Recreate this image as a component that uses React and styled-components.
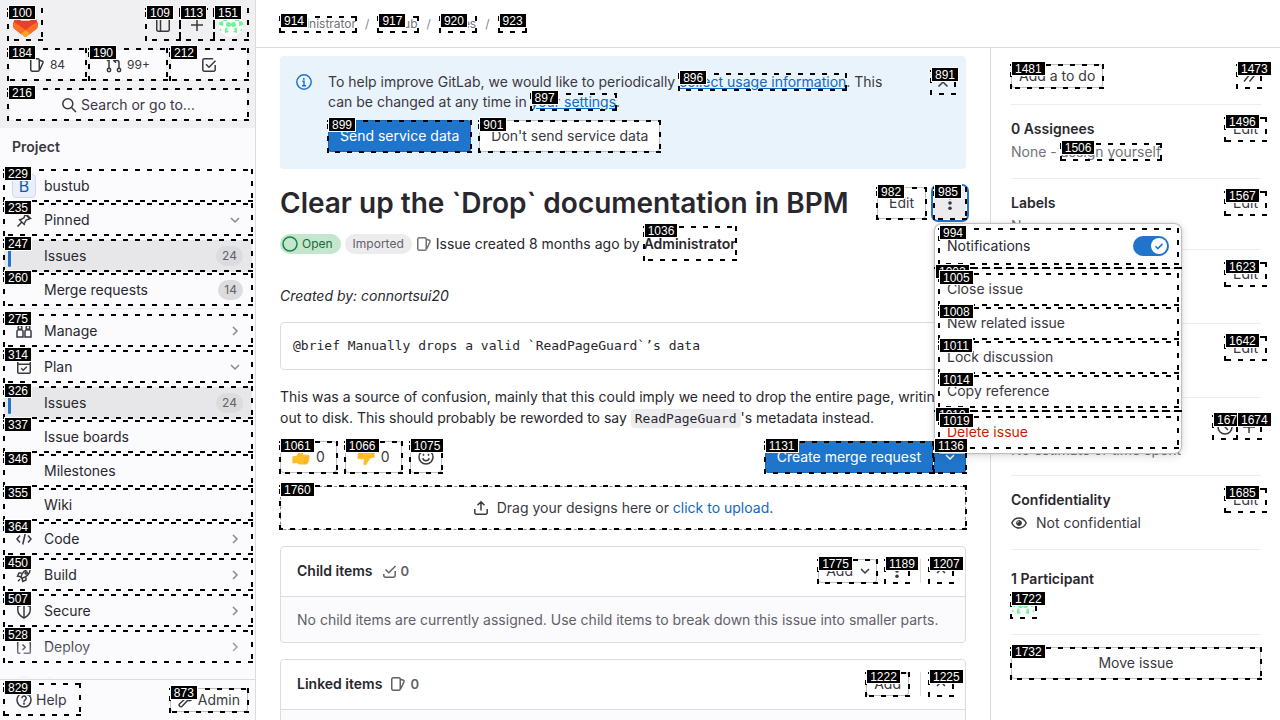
import React from "react";
import styled, { createGlobalStyle, css } from "styled-components";

const sans = `Inter, "Noto Sans", "Liberation Sans", sans-serif`;
const mono = `"DejaVu Sans Mono", "Liberation Mono", monospace`;

const c = {
  text: "#3a383f",
  heading: "#28272d",
  subtle: "#737278",
  muted: "#626168",
  line: "#dcdcde",
  faint: "#ececef",
  blue: "#1f75cb",
  link: "#1068bf",
  side: "#fbfafd",
};

const Global = createGlobalStyle`
  *, *::before, *::after { box-sizing: border-box; }
  body { margin: 0; background: #fff; color: ${c.text}; font: 14px/20px ${sans}; }
  button, input { font: inherit; color: inherit; }
  button { margin: 0; cursor: pointer; }
  a { color: inherit; text-decoration: none; }
  h1, h2, p, ul, pre { margin: 0; padding: 0; }
  ul { list-style: none; }
`;

/* ---------- element marks ---------- */

const dash = (deg) => `repeating-linear-gradient(${deg}deg, #000 0 5px, transparent 5px 12px)`;

const MarkBox = styled.span`
  position: absolute;
  inset: -1px -1px 0 -1px;
  z-index: 20;
  pointer-events: none;
  background:
    ${dash(90)} top left / 100% 2px no-repeat,
    ${dash(270)} bottom left / 100% 2px no-repeat,
    ${dash(0)} top left / 2px 100% no-repeat,
    ${dash(180)} top right / 2px 100% no-repeat;
`;

const MarkTag = styled.span`
  position: absolute;
  top: -4px;
  left: 0;
  z-index: 21;
  pointer-events: none;
  padding: 1px 3px 0;
  border: 1px solid #fff;
  background: #000;
  color: #fff;
  font: 400 12px/12px "Liberation Sans", sans-serif;
  font-style: normal;
  white-space: nowrap;
`;

const loweredMark = css`
  ${MarkBox} { inset: 0 -1px -1px -1px; }
  ${MarkTag} { top: -3px; }
`;

const Mark = ({ n }) => (
  <>
    <MarkBox aria-hidden="true" />
    <MarkTag aria-hidden="true">{n}</MarkTag>
  </>
);

/* ---------- icons ---------- */

const Svg = styled.svg`
  display: block;
  flex: none;
  fill: none;
  stroke: currentColor;
  stroke-width: 1.5;
`;

const shapes = {
  panel: (<><rect x="1.75" y="1.75" width="12.5" height="12.5" rx="1.5" /><path d="M5.5 2v12" /></>),
  plus: <path d="M8 2v12M2 8h12" />,
  issues: (<><rect x="1.75" y="1.75" width="8.5" height="12.5" rx="1.5" /><path d="M10.5 3.2l2.9 1.1a1 1 0 0 1 .6 1.3l-3.2 7.2" /></>),
  merge: (<><circle cx="3" cy="13" r="1.7" /><circle cx="13" cy="13" r="1.7" /><path d="M3 11.2V1.8M1 4l2-2.2M13 11.2V5.5a2 2 0 0 0-2-2H8M10 1.2L7.7 3.5 10 5.8" /></>),
  todo: (<><path d="M14.2 8v4.7a1.5 1.5 0 0 1-1.5 1.5H3.3a1.5 1.5 0 0 1-1.5-1.5V3.3a1.5 1.5 0 0 1 1.5-1.5h8.9" /><path d="M5 7.3l3 3 6.5-6.6" /></>),
  search: (<><circle cx="6.8" cy="6.8" r="5" /><path d="M10.5 10.5L15 15" /></>),
  pin: <path d="M1.5 14.5l4.7-4.7M3 7.2l5.8 5.8M4 8l4-2.2L9.5 1.5l5 5-4.3 1.5L8 12M9 2l5 5" />,
  down: <path d="M4 6l4 4 4-4" />,
  up: <path d="M4 10l4-4 4 4" />,
  right: <path d="M6 4l4 4-4 4" />,
  manage: (<><path d="M1 14V8.5a1.8 1.8 0 0 1 1.8-1.8h2.4A1.8 1.8 0 0 1 7 8.5V14H1zM9 14V8.5a1.8 1.8 0 0 1 1.8-1.8h2.4A1.8 1.8 0 0 1 15 8.5V14H9z" /><circle cx="4" cy="4.5" r="1.9" /><circle cx="12" cy="4.5" r="1.9" /></>),
  plan: (<><rect x="1.75" y="1.75" width="12.5" height="12.5" rx="1" /><path d="M2 5.2h12M5.2 9.2l2 2 3.6-3.4" /></>),
  code: <path d="M4 4.5L1 8l3 3.5M12 4.5L15 8l-3 3.5M9.3 2.5l-2.6 11" />,
  build: (<><path d="M5 10.7C5.5 6 9 2 14.3 1.7 14 7 10 10.5 5.6 11.2z" /><circle cx="10.2" cy="5.9" r="1.1" /><path d="M5.7 6H3L1.5 9.2l3.6.6M10 10.3V13l-3.3 1.5-.6-3.4M2 14.3l2-2" /></>),
  secure: (<><path d="M8 1.2l6.2 2.3V7c0 3.8-2.7 6.3-6.2 8C4.5 13.3 1.8 10.8 1.8 7V3.5z" /><path d="M8 1.5V15" /></>),
  deploy: (<><path d="M4.5 14.2H2.3a.6.6 0 0 1-.6-.6V3a1.2 1.2 0 0 1 1.2-1.2h10.2A1.2 1.2 0 0 1 14.3 3v10.6a.6.6 0 0 1-.6.6h-6" /><path d="M6.5 5.5L9.2 8.2 6.5 11" /></>),
  operate: (<><circle cx="8" cy="8" r="6.2" /><circle cx="8" cy="8" r="2" /></>),
  help: (<><circle cx="8" cy="8" r="7" /><path d="M5.8 6.2a2.2 2.2 0 1 1 3.2 2c-.7.4-1 .7-1 1.5" /><circle cx="8" cy="11.7" r=".4" /></>),
  admin: <path d="M14.5 4.3l-2.3 1.7-2-2 1.7-2.4C9.5 1 7.3 2.6 7.3 5c0 .6.1 1 .3 1.4l-5.9 5.4a1.6 1.6 0 0 0 2.4 2.4l5.5-5.8c2.8 1 5.3-1.2 4.9-4.1z" />,
  info: (<><circle cx="8" cy="8" r="7.2" /><path d="M6.3 7.2H8v4.3M6 11.7h4M7.8 4v1.7" /></>),
  close: <path d="M3.5 3.5l9 9M12.5 3.5l-9 9" />,
  open: <circle cx="8" cy="8" r="7" />,
  smile: (<><circle cx="8" cy="8" r="7" /><path d="M5.5 4.8v2M10.5 4.8v2M4.8 9.3a3.3 3.3 0 0 0 6.4 0" /></>),
  upload: <path d="M1.8 9v3.7a1.5 1.5 0 0 0 1.5 1.5h9.4a1.5 1.5 0 0 0 1.5-1.5V9M8 10.5V2M4.5 5.3L8 1.8l3.5 3.5" />,
  tasks: (<><path d="M14.2 8v4.5a1.7 1.7 0 0 1-1.7 1.7h-8a1.7 1.7 0 0 1-1.7-1.7V11" /><path d="M4.5 6.5l3.3 3.3L14.5 3" /></>),
  collapse: <path d="M3 13.5l4.5-5.5L3 2.5M8.5 13.5L13 8 8.5 2.5" />,
  clock: (<><circle cx="8" cy="8" r="7" /><path d="M8 3.5V8l3 3" /></>),
  eye: (<><path d="M.8 8C2.5 4.6 5 3 8 3s5.500 1.600 7.200 5C13.500 11.400 11 13 8 13S2.500 11.400.8 8z" /><path d="M8 5.500A2.500 2.500 0 1 1 5.500 8C7 8 8 7 8 5.500z" fill="currentColor" stroke="none" /><circle cx="8" cy="8" r="2.4" strokeWidth="1" /></>),
  kebab: (<g fill="currentColor" stroke="none"><circle cx="8" cy="2.8" r="1.8" /><circle cx="8" cy="8" r="1.8" /><circle cx="8" cy="13.2" r="1.8" /></g>),
};

const Icon = ({ name, size = 16, ...rest }) => (
  <Svg width={size} height={size} viewBox="0 0 16 16" aria-hidden="true" {...rest}>{shapes[name]}</Svg>
);

const Tanuki = () => (
  <svg width="25" height="24" viewBox="0 0 25 24" aria-hidden="true">
    <path fill="#E24329" d="m24.507 9.5-.034-.09L21.082.562a.896.896 0 0 0-1.694.091l-2.29 7.01H7.825L5.535.653a.898.898 0 0 0-1.694-.09L.451 9.411.416 9.5a6.297 6.297 0 0 0 2.09 7.278l.012.01.03.022 5.16 3.867 2.56 1.935 1.554 1.176a1.051 1.051 0 0 0 1.268 0l1.555-1.176 2.56-1.935 5.197-3.89.014-.01A6.297 6.297 0 0 0 24.507 9.5Z" />
    <path fill="#FC6D26" d="m24.507 9.5-.034-.09a11.44 11.44 0 0 0-4.56 2.051l-7.447 5.632 4.742 3.584 5.197-3.89.014-.01A6.297 6.297 0 0 0 24.507 9.5Z" />
    <path fill="#FCA326" d="m7.707 20.677 2.56 1.935 1.555 1.176a1.051 1.051 0 0 0 1.268 0l1.555-1.176 2.56-1.935-4.743-3.584-4.755 3.584Z" />
    <path fill="#FC6D26" d="M5.01 11.461a11.43 11.43 0 0 0-4.56-2.05L.416 9.5a6.297 6.297 0 0 0 2.09 7.278l.012.01.03.022 5.16 3.867 4.745-3.584-7.444-5.632Z" />
  </svg>
);

const AvatarSvg = styled.svg`
  display: block;
  border-radius: 50%;
  background: #fff;
`;

const Identicon = () => (
  <AvatarSvg width="24" height="24" viewBox="0 0 24 24" aria-hidden="true">
    <g fill="#6cf592">
      <path d="M0 9l4-1v5l-4-1zM24 9l-4-1v5l4-1zM4 4h4v4H4zM16 4h4v4h-4zM10 4h4v3h-4z" />
      <circle cx="9.5" cy="11.5" r="2.5" /><circle cx="14.5" cy="11.5" r="2.5" />
      <path d="M6 20v-4l1-2 2 2-1 1 2 2zM18 20v-4l-1-2-2 2 1 1-2 2zM1 15l2 3H1zM23 15l-2 3h2z" />
    </g>
  </AvatarSvg>
);

const Thumb = ({ down }) => (
  <svg width="18" height="18" viewBox="0 0 16 16" aria-hidden="true">
    <g transform={down ? "rotate(180 8 8)" : undefined}>
      <path fill="#fcbf2a" d="M.3 7.5 4 6.8 8 .8c1.2-.6 2.4.2 2.3 1.5L9.7 6H14c2 0 2.2 2.2 1 2.6.9.6.7 2-.3 2.3.6.7.3 1.9-.7 2.1.2.9-.3 1.7-1.5 1.7H7.5c-1 0-2-.5-3-1.2H.3z" />
      <path fill="none" stroke="#f5a31a" strokeWidth=".6" d="M11 8.7h4M10.7 10.9h4M10.5 13h3.5" />
    </g>
  </svg>
);

/* ---------- shell ---------- */

const Shell = styled.div`
  display: grid;
  grid-template-columns: 256px minmax(0, 1fr);
  height: 100vh;
  overflow: hidden;
`;

const Sidebar = styled.nav`
  display: flex;
  flex-direction: column;
  min-height: 0;
  background: ${c.side};
  border-right: 1px solid ${c.line};
`;

const UserBar = styled.div`
  display: flex;
  flex-direction: column;
  gap: 8px;
  padding: 9px 7px 7px 8px;
  background: #f0f0f2;
`;

const BarRow = styled.div`
  display: flex;
  gap: ${(p) => p.$gap || 0}px;
  align-items: center;
`;

const LogoLink = styled.a`
  position: relative;
  display: grid;
  place-items: center;
  width: 34px;
  height: 32px;
  margin-right: auto;
`;

const BarButton = styled.button`
  position: relative;
  display: grid;
  place-items: center;
  width: 34px;
  height: 32px;
  padding: 0;
  border: 0;
  background: transparent;
`;

const Counter = styled.a`
  position: relative;
  flex: 1;
  display: flex;
  align-items: center;
  justify-content: center;
  gap: 5px;
  height: 32px;
  border-radius: 4px;
  background: ${c.side};
  box-shadow: 0 0 0 1px #ebebee inset;
  font-size: 12px;
`;

const SearchButton = styled.button`
  position: relative;
  display: flex;
  align-items: center;
  justify-content: center;
  gap: 4px;
  height: 32px;
  border: 0;
  border-radius: 4px;
  background: ${c.side};
  box-shadow: 0 0 0 1px #ebebee inset;
`;

const NavScroll = styled.div`
  position: relative;
  flex: 1;
  min-height: 0;
  overflow: hidden;
  padding: 9px 3px 0 4px;

  &::after {
    content: "";
    position: absolute;
    inset: auto 0 0 0;
    height: 40px;
    background: linear-gradient(rgba(251, 250, 253, 0), ${c.side});
  }
`;

const NavTitle = styled.h2`
  padding: 0 8px;
  margin-bottom: 13px;
  font-size: 14px;
  line-height: 20px;
  font-weight: 600;
`;

const NavRow = styled.a`
  position: relative;
  display: grid;
  grid-template-columns: 24px minmax(0, 1fr) auto;
  align-items: center;
  column-gap: 8px;
  height: 32px;
  padding: 0 9px 0 8px;
  margin-bottom: ${(p) => (p.$header ? 4 : 2)}px;
  color: ${c.heading};
  ${(p) => p.$active && css`
    border-radius: 4px;
    background: #e7e7e9;
    &::before {
      content: "";
      position: absolute;
      left: 4px;
      top: 8px;
      width: 3px;
      height: 19px;
      border-radius: 3px;
      background: ${c.blue};
    }
  `}
`;

const NavIcon = styled.span`
  display: grid;
  place-items: center;
  color: ${(p) => (p.$soft ? "#89888d" : c.text)};
`;

const Pill = styled.span`
  padding: 0 6px;
  border-radius: 10px;
  background: #dcdcde;
  color: ${c.muted};
  font-size: 12px;
  line-height: 20px;
`;

const ProjectLetter = styled.span`
  display: grid;
  place-items: center;
  width: 24px;
  height: 24px;
  border: 1px solid #d0daeb;
  border-radius: 4px;
  background: #e9f0fb;
  color: #0b5cad;
  font-size: 16px;
`;

const NavDivider = styled.hr`
  height: 1px;
  margin: 1px 12px 6px;
  border: 0;
  background: ${c.faint};
`;

const NavFooter = styled.div`
  display: flex;
  align-items: center;
  justify-content: space-between;
  padding: 4px 7px 4px 4px;
  border-top: 1px solid ${c.line};
`;

const HelpButton = styled.button`
  position: relative;
  display: flex;
  align-items: center;
  gap: 4px;
  height: 32px;
  padding: 0 13px 0 12px;
  border: 0;
  background: transparent;
`;

const Dot = styled.span`
  position: absolute;
  top: 6px;
  left: 22px;
  width: 6px;
  height: 6px;
  border-radius: 50%;
  background: ${c.blue};
`;

/* ---------- buttons ---------- */

const Button = styled.button`
  position: relative;
  display: inline-flex;
  align-items: center;
  justify-content: center;
  gap: ${(p) => p.$gap ?? 4}px;
  height: ${(p) => (p.$small ? 24 : 32)}px;
  padding: 0 ${(p) => (p.$icon ? 0 : p.$small ? 8 : 12)}px;
  width: ${(p) => (p.$icon ? (p.$small ? "24px" : "32px") : p.$block ? "100%" : "auto")};
  border: 0;
  border-radius: 4px;
  background: #fff;
  box-shadow: inset 0 0 0 1px #bfbfc3;
  color: ${c.text};
  white-space: nowrap;
  ${loweredMark}
  ${(p) => p.$plain && css`background: transparent; box-shadow: none;`}
  ${(p) => p.$primary && css`background: ${c.blue}; box-shadow: inset 0 0 0 1px #1068bf; color: #fff;`}
  ${(p) => p.$focused && css`background: ${c.faint}; box-shadow: 0 0 0 1px #fff, 0 0 0 3px ${c.blue};`}
`;

const EditButton = styled(Button)`
  margin-right: -5px;
`;

const CaretButton = styled(Button)`
  padding-right: 4px;
`;

const DismissButton = styled(Button)`
  margin-top: -2px;
`;

const SplitButton = styled.div`
  display: flex;
  gap: 1px;
  margin-left: auto;
  & > :first-child { border-radius: 4px 0 0 4px; }
  & > :last-child { border-radius: 0 4px 4px 0; }
`;

/* ---------- page ---------- */

const Page = styled.div`
  display: flex;
  flex-direction: column;
  min-height: 0;
`;

const TopBar = styled.header`
  display: flex;
  align-items: center;
  flex: none;
  height: 48px;
  padding: 0 24px;
  border-bottom: 1px solid ${c.line};
`;

const Crumbs = styled.ol`
  display: flex;
  gap: 9px;
  margin: 0;
  padding: 0;
  list-style: none;
  color: ${c.subtle};
  font-size: 12px;
  line-height: 16px;

  li { display: flex; gap: 9px; }
  li + li::before { content: "/"; color: #89888d; }
  a { position: relative; }
  ${loweredMark}
`;

const Body = styled.div`
  flex: 1;
  min-height: 0;
  display: grid;
  grid-template-columns: minmax(0, 1fr) 290px;
  overflow: hidden;
`;

const Main = styled.main`
  min-width: 0;
  padding: 8px 24px 24px;
`;

const Banner = styled.section`
  display: grid;
  grid-template-columns: 16px minmax(0, 1fr) 24px;
  column-gap: 16px;
  align-items: start;
  padding: 16px 11px 17px 16px;
  border-radius: 4px;
  background: #e9f3fc;
`;

const BannerIcon = styled.span`
  padding-top: 2px;
  color: ${c.blue};
`;

const BannerText = styled.p`
  padding-right: 20px;
`;

const InlineLink = styled.a`
  position: relative;
  color: ${c.link};
  text-decoration: ${(p) => (p.$underline ? "underline" : "none")};
  ${loweredMark}
`;

const BannerActions = styled.div`
  display: flex;
  gap: 8px;
  margin-top: 8px;
`;

const TitleRow = styled.div`
  display: flex;
  align-items: center;
  gap: 8px;
  margin-top: 16px;
`;

const Title = styled.h1`
  flex: 1;
  min-width: 0;
  color: ${c.heading};
  font-size: 28px;
  line-height: 36px;
  font-weight: 600;
`;

const MenuAnchor = styled.div`
  position: relative;
  display: flex;
`;

const Menu = styled.div`
  position: absolute;
  top: calc(100% + 4px);
  left: 0;
  z-index: 10;
  width: 248px;
  padding: 4px 0 3px;
  border: 1px solid #bfbfc3;
  border-radius: 8px;
  background: #fff;
  box-shadow: 0 2px 8px rgba(31, 30, 36, 0.16), 0 0 2px rgba(31, 30, 36, 0.16);
  color: ${c.text};
  ${loweredMark}
`;

const MenuGroup = styled.div`
  position: relative;
  padding: 4px 3px 0 4px;
  border-top: 1px solid ${c.line};
`;

const GroupRule = styled.span`
  position: absolute;
  inset: -2px 0 auto 0;
  height: 1px;
`;

const MenuItem = styled.button`
  position: relative;
  display: block;
  width: 100%;
  height: 32px;
  margin-bottom: ${(p) => (p.$last ? 4 : 2)}px;
  padding: 0 8px;
  border: 0;
  background: transparent;
  color: ${(p) => (p.$danger ? "#c91c00" : c.text)};
  text-align: left;
`;

const ToggleRow = styled.label`
  position: relative;
  display: flex;
  align-items: center;
  justify-content: space-between;
  height: 36px;
  margin: 0 3px 4px 4px;
  padding: 0 9px 0 8px;
  color: ${c.heading};
`;

const Toggle = styled.input`
  appearance: none;
  width: 36px;
  height: 20px;
  margin: 0;
  border-radius: 10px;
  background:
    url("data:image/svg+xml,%3Csvg xmlns='http://www.w3.org/2000/svg' viewBox='0 0 16 16'%3E%3Ccircle cx='8' cy='8' r='8' fill='white'/%3E%3Cpath d='M4.5 8.3l2.3 2.3 4.7-4.7' fill='none' stroke='%231f75cb' stroke-width='1.5'/%3E%3C/svg%3E") right 2px center / 16px 16px no-repeat,
    ${c.blue};
`;

const Meta = styled.div`
  display: flex;
  align-items: center;
  gap: 4px;
  margin-top: 6px;
  color: ${c.heading};
`;

const Badge = styled.span`
  display: inline-flex;
  align-items: center;
  gap: 4px;
  height: 20px;
  padding: 0 8px 0 ${(p) => (p.$open ? 2 : 8)}px;
  border-radius: 10px;
  background: ${(p) => (p.$open ? "#c3e6cd" : c.faint)};
  color: ${(p) => (p.$open ? "#24663b" : c.muted)};
  font-size: 12px;
  svg { color: #108548; }
`;

const TypeIcon = styled.span`
  color: ${c.subtle};
`;

const Author = styled.a`
  position: relative;
  padding: 7px 0;
  font-weight: 600;
`;

const Description = styled.div`
  margin-top: 24px;
  color: ${c.heading};
  line-height: 21px;
`;

const CodeBlock = styled.pre`
  margin: 16px 0;
  padding: 13px 12px;
  border: 1px solid ${c.line};
  border-radius: 4px;
  font: 13px/20px ${mono};
  overflow: hidden;
`;

const Code = styled.code`
  padding: 2px 4px;
  border-radius: 4px;
  background: ${c.faint};
  font: 13px/17px ${mono};
`;

const ActionRow = styled.div`
  display: flex;
  gap: 8px;
  margin-top: 13px;
`;

const DropZone = styled.div`
  position: relative;
  display: flex;
  align-items: center;
  justify-content: center;
  gap: 8px;
  height: 44px;
  margin: 13px 0 16px;
  outline: 1px dashed #89888d;
  outline-offset: -1px;
  border-radius: 4px;
`;

const Card = styled.section`
  margin-bottom: 16px;
  border: 1px solid ${c.line};
  border-radius: 4px;
  background: ${c.side};
`;

const CardHead = styled.div`
  display: flex;
  align-items: center;
  gap: 8px;
  padding: 12px 12px 13px 16px;
  border-bottom: 1px solid ${c.line};
  border-radius: 4px 4px 0 0;
  background: #fff;
`;

const CardTitle = styled.h2`
  color: ${c.heading};
  font-size: 14px;
  line-height: 20px;
  font-weight: 600;
`;

const CardCount = styled.span`
  display: flex;
  align-items: center;
  gap: 4px;
  margin-right: auto;
  color: ${c.muted};
  font-size: 13px;
  font-weight: 600;
`;

const VRule = styled.span`
  width: 1px;
  height: 24px;
  margin-left: 3px;
  background: ${c.line};
`;

const CardBody = styled.p`
  padding: 13px 16px 12px;
  color: ${c.muted};
`;

/* ---------- details column ---------- */

const Aside = styled.aside`
  padding: 16px 19px 0 20px;
  border-left: 1px solid ${c.line};
`;

const AsideTop = styled.div`
  display: flex;
  justify-content: space-between;
  padding-bottom: 16px;
`;

const Block = styled.section`
  padding: ${(p) => (p.$roomy ? 17 : 12)}px 0 ${(p) => p.$bottom || 16}px;
  border-top: 1px solid ${c.faint};
`;

const BlockHead = styled.div`
  display: flex;
  align-items: center;
  justify-content: space-between;
  min-height: 24px;
`;

const BlockTitle = styled.h2`
  color: ${c.heading};
  font-size: 14px;
  line-height: 20px;
  font-weight: 600;
`;

const BlockValue = styled.div`
  color: ${c.subtle};
  line-height: 21px;
  a { position: relative; }
  ${loweredMark}
`;

const IconValue = styled(BlockValue)`
  display: flex;
  gap: 9px;
  align-items: center;
  color: ${c.text};
`;

const AvatarLink = styled.a`
  position: relative;
  display: block;
  width: 25px;
  height: 24px;
  margin-top: 3px;
  ${loweredMark}
`;

/* ---------- data ---------- */

const pinned = [
  { n: 247, label: "Issues", count: 24, active: true },
  { n: 260, label: "Merge requests", count: 14 },
];

const sections = [
  { n: 275, label: "Manage", icon: "manage" },
  {
    n: 314, label: "Plan", icon: "plan",
    children: [
      { n: 326, label: "Issues", count: 24, active: true },
      { n: 337, label: "Issue boards" },
      { n: 346, label: "Milestones" },
      { n: 355, label: "Wiki" },
    ],
  },
  { n: 364, label: "Code", icon: "code" },
  { n: 450, label: "Build", icon: "build" },
  { n: 507, label: "Secure", icon: "secure" },
  { n: 528, label: "Deploy", icon: "deploy" },
  { label: "Operate", icon: "operate" },
];

const crumbs = [
  { n: 914, label: "Administrator" },
  { n: 917, label: "bustub" },
  { n: 920, label: "Issues" },
  { n: 923, label: "#201" },
];

const menuItems = [
  { n: 1005, label: "Close issue" },
  { n: 1008, label: "New related issue" },
  { n: 1011, label: "Lock discussion" },
  { n: 1014, label: "Copy reference" },
];

const NavLeaf = ({ item }) => (
  <NavRow href="#" $active={item.active}>
    <span />
    <span>{item.label}</span>
    {item.count && <Pill>{item.count}</Pill>}
    <Mark n={item.n} />
  </NavRow>
);

const NavHeader = ({ n, label, icon, open }) => (
  <NavRow href="#" $header>
    <NavIcon><Icon name={icon} /></NavIcon>
    <span>{label}</span>
    <NavIcon $soft><Icon name={open ? "down" : "right"} /></NavIcon>
    {n && <Mark n={n} />}
  </NavRow>
);

const EditLink = ({ n }) => (
  <EditButton $small $plain>Edit<Mark n={n} /></EditButton>
);

export default function App() {
  return (
    <>
      <Global />
      <Shell>
        <Sidebar aria-label="Primary navigation">
          <UserBar>
            <BarRow>
              <LogoLink href="#" aria-label="Homepage"><Tanuki /><Mark n={100} /></LogoLink>
              <BarButton aria-label="Toggle sidebar"><Icon name="panel" /><Mark n={109} /></BarButton>
              <BarButton aria-label="Create new"><Icon name="plus" /><Mark n={113} /></BarButton>
              <BarButton aria-label="User menu"><Identicon /><Mark n={151} /></BarButton>
            </BarRow>
            <BarRow $gap={3}>
              <Counter href="#"><Icon name="issues" />84<Mark n={184} /></Counter>
              <Counter href="#"><Icon name="merge" />99+<Mark n={190} /></Counter>
              <Counter href="#" aria-label="To-do list"><Icon name="todo" /><Mark n={212} /></Counter>
            </BarRow>
            <SearchButton><Icon name="search" />Search or go to…<Mark n={216} /></SearchButton>
          </UserBar>
          <NavScroll>
            <NavTitle>Project</NavTitle>
            <NavRow href="#">
              <ProjectLetter>B</ProjectLetter>
              <span>bustub</span>
              <Mark n={229} />
            </NavRow>
            <NavHeader n={235} label="Pinned" icon="pin" open />
            {pinned.map((i) => <NavLeaf key={i.n} item={i} />)}
            <NavDivider />
            {sections.map((s) => (
              <div key={s.label}>
                <NavHeader n={s.n} label={s.label} icon={s.icon} open={!!s.children} />
                {s.children && s.children.map((i) => <NavLeaf key={i.n} item={i} />)}
              </div>
            ))}
          </NavScroll>
          <NavFooter>
            <HelpButton><Icon name="help" />Help<Dot /><Mark n={829} /></HelpButton>
            <Button as="a" href="#" $small><Icon name="admin" />Admin<Mark n={873} /></Button>
          </NavFooter>
        </Sidebar>

        <Page>
          <TopBar>
            <Crumbs>
              {crumbs.map((b) => (
                <li key={b.n}><a href="#">{b.label}<Mark n={b.n} /></a></li>
              ))}
            </Crumbs>
          </TopBar>
          <Body>
            <Main>
              <Banner>
                <BannerIcon><Icon name="info" /></BannerIcon>
                <div>
                  <BannerText>
                    To help improve GitLab, we would like to periodically{" "}
                    <InlineLink href="#" $underline>collect usage information<Mark n={896} /></InlineLink>. This
                    can be changed at any time in{" "}
                    <InlineLink href="#" $underline>your settings<Mark n={897} /></InlineLink>.
                  </BannerText>
                  <BannerActions>
                    <Button $primary>Send service data<Mark n={899} /></Button>
                    <Button>Don't send service data<Mark n={901} /></Button>
                  </BannerActions>
                </div>
                <DismissButton $small $icon $plain aria-label="Dismiss"><Icon name="close" /><Mark n={891} /></DismissButton>
              </Banner>

              <TitleRow>
                <Title>Clear up the `Drop` documentation in BPM</Title>
                <Button>Edit<Mark n={982} /></Button>
                <MenuAnchor>
                  <Button $icon $focused aria-label="More actions"><Icon name="kebab" /><Mark n={985} /></Button>
                  <Menu>
                    <ToggleRow>
                      Notifications
                      <Toggle type="checkbox" role="switch" defaultChecked />
                      <Mark n={994} />
                    </ToggleRow>
                    <MenuGroup>
                      <GroupRule><Mark n={1002} /></GroupRule>
                      {menuItems.map((m, i) => (
                        <MenuItem key={m.n} $last={i === menuItems.length - 1}>{m.label}<Mark n={m.n} /></MenuItem>
                      ))}
                    </MenuGroup>
                    <MenuGroup>
                      <GroupRule><Mark n={1018} /></GroupRule>
                      <MenuItem $danger>Delete issue<Mark n={1019} /></MenuItem>
                    </MenuGroup>
                  </Menu>
                </MenuAnchor>
              </TitleRow>

              <Meta>
                <Badge $open><Icon name="open" />Open</Badge>
                <Badge>Imported</Badge>
                <TypeIcon><Icon name="issues" /></TypeIcon>
                <span>Issue created 8 months ago by</span>
                <Author href="#">Administrator<Mark n={1036} /></Author>
              </Meta>

              <Description>
                <p><em>Created by: connortsui20</em></p>
                <CodeBlock>@brief Manually drops a valid `ReadPageGuard`’s data</CodeBlock>
                <p>
                  This was a source of confusion, mainly that this could imply we need to drop the entire page, writing it
                  out to disk. This should probably be reworded to say <Code>ReadPageGuard</Code>'s metadata instead.
                </p>
              </Description>

              <ActionRow>
                <Button $gap={6} aria-label="Thumbs up"><Thumb />0<Mark n={1061} /></Button>
                <Button $gap={6} aria-label="Thumbs down"><Thumb down />0<Mark n={1066} /></Button>
                <Button $icon aria-label="Add reaction"><Icon name="smile" /><Mark n={1075} /></Button>
                <SplitButton>
                  <Button $primary>Create merge request<Mark n={1131} /></Button>
                  <Button $primary $icon aria-label="Options"><Icon name="down" /><Mark n={1136} /></Button>
                </SplitButton>
              </ActionRow>

              <DropZone>
                <Icon name="upload" />
                <span>Drag your designs here or <InlineLink href="#">click to upload</InlineLink>.</span>
                <Mark n={1760} />
              </DropZone>

              <Card>
                <CardHead>
                  <CardTitle>Child items</CardTitle>
                  <CardCount><Icon name="tasks" />0</CardCount>
                  <CaretButton $small>Add<Icon name="down" /><Mark n={1775} /></CaretButton>
                  <Button $small $icon $plain aria-label="More"><Icon name="kebab" /><Mark n={1189} /></Button>
                  <VRule />
                  <Button $small $icon $plain aria-label="Collapse"><Icon name="up" /><Mark n={1207} /></Button>
                </CardHead>
                <CardBody>No child items are currently assigned. Use child items to break down this issue into smaller parts.</CardBody>
              </Card>

              <Card>
                <CardHead>
                  <CardTitle>Linked items</CardTitle>
                  <CardCount><Icon name="issues" />0</CardCount>
                  <Button $small>Add<Mark n={1222} /></Button>
                  <VRule />
                  <Button $small $icon $plain aria-label="Collapse"><Icon name="up" /><Mark n={1225} /></Button>
                </CardHead>
                <CardBody>Link issues together to show that they're related.</CardBody>
              </Card>
            </Main>

            <Aside>
              <AsideTop>
                <Button $small>Add a to do<Mark n={1481} /></Button>
                <Button $small $icon $plain aria-label="Collapse sidebar"><Icon name="collapse" /><Mark n={1473} /></Button>
              </AsideTop>
              <Block>
                <BlockHead><BlockTitle>0 Assignees</BlockTitle><EditLink n={1496} /></BlockHead>
                <BlockValue>None - <a href="#">assign yourself<Mark n={1506} /></a></BlockValue>
              </Block>
              <Block $bottom={13}>
                <BlockHead><BlockTitle>Labels</BlockTitle><EditLink n={1567} /></BlockHead>
                <BlockValue>None</BlockValue>
              </Block>
              <Block>
                <BlockHead><BlockTitle>Milestone</BlockTitle><EditLink n={1623} /></BlockHead>
                <BlockValue>None</BlockValue>
              </Block>
              <Block>
                <BlockHead><BlockTitle>Due date</BlockTitle><EditLink n={1642} /></BlockHead>
                <BlockValue>None</BlockValue>
              </Block>
              <Block $roomy $bottom={15}>
                <BlockHead>
                  <BlockTitle>Time tracking</BlockTitle>
                  <BarRow>
                    <Button $small $icon $plain aria-label="Set estimate"><Icon name="clock" /><Mark n={1673} /></Button>
                    <Button $small $icon $plain aria-label="Add time entry"><Icon name="plus" /><Mark n={1674} /></Button>
                  </BarRow>
                </BlockHead>
                <BlockValue>No estimate or time spent</BlockValue>
              </Block>
              <Block>
                <BlockHead><BlockTitle>Confidentiality</BlockTitle><EditLink n={1685} /></BlockHead>
                <IconValue><Icon name="eye" />Not confidential</IconValue>
              </Block>
              <Block $roomy>
                <BlockHead><BlockTitle>1 Participant</BlockTitle></BlockHead>
                <AvatarLink href="#" aria-label="Administrator"><Identicon /><Mark n={1722} /></AvatarLink>
              </Block>
              <Block>
                <Button $block>Move issue<Mark n={1732} /></Button>
              </Block>
            </Aside>
          </Body>
        </Page>
      </Shell>
    </>
  );
}
